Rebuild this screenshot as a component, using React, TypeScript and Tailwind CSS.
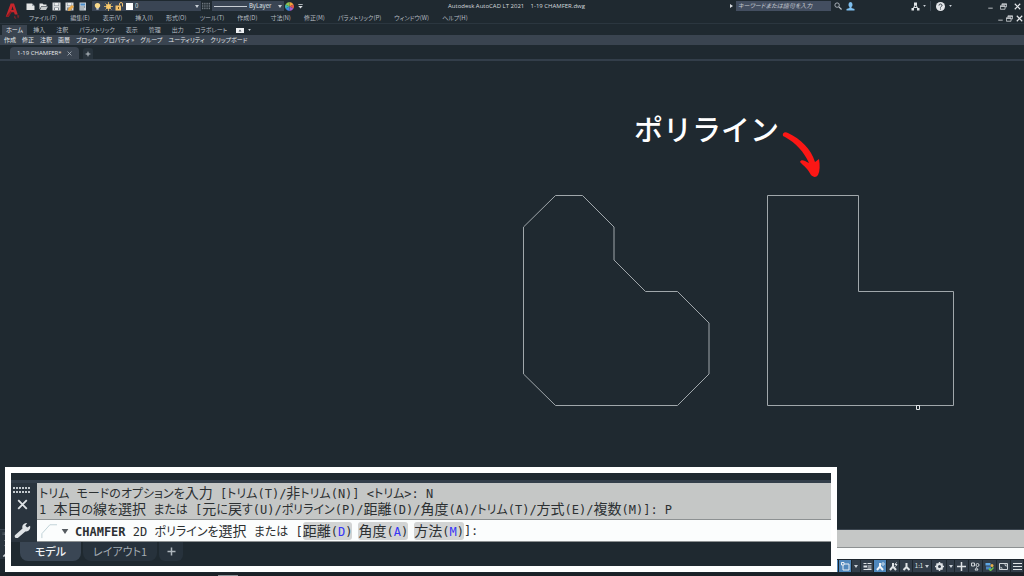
import type { ReactNode } from "react";
import clsx from "clsx";

const menus = [
  "ファイル(F)",
  "編集(E)",
  "表示(V)",
  "挿入(I)",
  "形式(O)",
  "ツール(T)",
  "作成(D)",
  "寸法(N)",
  "修正(M)",
  "パラメトリック(P)",
  "ウィンドウ(W)",
  "ヘルプ(H)",
];

const ribbonTabs = [
  "ホーム",
  "挿入",
  "注釈",
  "パラメトリック",
  "表示",
  "管理",
  "出力",
  "コラボレート",
];

const panels = [
  "作成",
  "修正",
  "注釈",
  "画層",
  "ブロック",
  "プロパティ »",
  "グループ",
  "ユーティリティ",
  "クリップボード",
];

const options = [
  { name: "距離", hotkey: "D" },
  { name: "角度", hotkey: "A" },
  { name: "方法", hotkey: "M" },
];

function Icon({
  children,
  className = "h-[9px] w-[9px]",
}: {
  children: ReactNode;
  className?: string;
}) {
  return (
    <svg viewBox="0 0 18 18" fill="none" className={clsx("block shrink-0", className)}>
      {children}
    </svg>
  );
}

function Caret({ className = "h-[3px] w-[4px] fill-[#c9cfd5]" }: { className?: string }) {
  return (
    <svg viewBox="0 0 8 6" className={clsx("block shrink-0", className)}>
      <path d="M0 0h8L4 6z" />
    </svg>
  );
}

function QuickAccess() {
  return (
    <div className="flex items-center gap-[4px]">
      <button aria-label="クイック新規作成">
        <Icon>
          <path d="M1 3h11l5 5v8H1z" fill="#e4e6e6" />
          <path d="M12 3v5h5z" fill="#98a0a6" />
        </Icon>
      </button>
      <button aria-label="開く">
        <Icon>
          <path d="M1 15V3h6l2 2h6v3H5z" fill="#e4e6e6" />
          <path d="M5 9h13l-4 7H2z" fill="#c8cccd" />
        </Icon>
      </button>
      <button aria-label="上書き保存">
        <Icon>
          <path d="M1 1h16v16H1z" fill="#d8dbdc" />
          <path d="M4 2h10v6H4zM4 11h10v5H4z" fill="#7d868e" />
          <path d="M5 2h8v5H5zM6 12h6v4H6z" fill="#eceeee" />
        </Icon>
      </button>
      <button aria-label="名前を付けて保存">
        <Icon>
          <path d="M1 1h16v16H1z" fill="#d8dbdc" />
          <path d="M4 2h10v6H4zM4 11h10v5H4z" fill="#7d868e" />
          <path d="M5 2h8v5H5z" fill="#eceeee" />
          <path d="M6 18l1-6 7-6 4 3-7 8z" fill="#e9a94a" />
        </Icon>
      </button>
      <button aria-label="印刷">
        <Icon>
          <path d="M3 1h13v16H3z" fill="#c9d0d6" />
          <path d="M5 3h9v4H5z" fill="#4a8ecb" />
          <path d="M5 9h2v2H5zM9 9h2v2H9zM12 9h2v2h-2zM5 13h2v2H5zM9 13h2v2H9z" fill="#55606a" />
        </Icon>
      </button>
    </div>
  );
}

function LayerControl() {
  return (
    <div className="ml-[5px] flex h-[10px] w-[109px] shrink-0 items-center gap-[2px] bg-[#3a4554] px-[2px]">
      <Icon className="h-[9px] w-[7px]">
        <path d="M2 7a7 7 0 0114 0c0 3-3 4-3 6H5c0-2-3-3-3-6z" fill="#f7d98b" />
        <path d="M6 13h6v4H6z" fill="#d0d4d8" />
      </Icon>
      <Icon className="ml-px h-[9px] w-[9px]">
        <circle cx="9" cy="9" r="5" fill="#f7c86b" />
        <path d="M9 0v18M0 9h18M3 3l12 12M15 3L3 15" stroke="#f7c86b" strokeWidth="1.5" />
      </Icon>
      <Icon>
        <path d="M1 7h11v10H1z" fill="#f3c06a" />
        <path d="M9 7V4a3 3 0 016 0v5" stroke="#f3c06a" strokeWidth="2" />
        <path d="M6 10h2v4H6z" fill="#6b5426" />
      </Icon>
      <span className="h-[7px] w-[7px] bg-white" />
      <select
        aria-label="画層"
        className="h-[10px] min-w-0 flex-1 appearance-none bg-transparent text-[6px] leading-[10px] text-[#dde1e5]"
      >
        <option>0</option>
      </select>
      <Caret />
    </div>
  );
}

function WindowButtons({ className }: { className: string }) {
  return (
    <div className={clsx("flex items-center", className)}>
      <button aria-label="最小化">
        <Icon className="h-[7px] w-[5px]">
          <path d="M1 15h16" stroke="#d8dce0" strokeWidth="3" />
        </Icon>
      </button>
      <button aria-label="元に戻す（縮小）">
        <Icon className="h-[7px] w-[7px]">
          <path d="M5 6V2h12v8h-4M1 7h12v9H1zM1 9h12M5 4h12" stroke="#d8dce0" strokeWidth="2" />
        </Icon>
      </button>
      <button aria-label="閉じる">
        <Icon className="h-[7px] w-[7px]">
          <path d="M2 2l14 14M16 2L2 16" stroke="#e4e7ea" strokeWidth="3" />
        </Icon>
      </button>
    </div>
  );
}

function TitleBar() {
  return (
    <div className="flex h-[12px] items-center">
      <QuickAccess />
      <LayerControl />
      <Icon className="ml-px h-[8px] w-[8px]">
        <path
          d="M0 3h18M0 7h18M0 11h18M0 15h18"
          stroke="#8d959d"
          strokeWidth="2"
          strokeDasharray="3 2"
        />
      </Icon>
      <div className="ml-[2px] flex h-[10px] w-[72px] shrink-0 items-center bg-[#3a4554] px-[2px]">
        <span className="h-px w-[33px] bg-[#c9cfd5]" />
        <select
          aria-label="線種"
          className="ml-[2px] h-[10px] min-w-0 flex-1 appearance-none bg-transparent text-[6px] leading-[10px] text-[#dde1e5]"
        >
          <option>ByLayer</option>
        </select>
        <Caret />
      </div>
      <button aria-label="色" className="ml-px">
        <Icon>
          <path d="M9 9V0a9 9 0 018 5z" fill="#f0a23c" />
          <path d="M9 9l8-4a9 9 0 010 8z" fill="#e2574c" />
          <path d="M9 9l8 4a9 9 0 01-8 5z" fill="#a45bc8" />
          <path d="M9 9v9a9 9 0 01-8-5z" fill="#3f86e0" />
          <path d="M9 9l-8 4a9 9 0 010-8z" fill="#3cb6b0" />
          <path d="M9 9L1 5a9 9 0 018-5z" fill="#8cc152" />
        </Icon>
      </button>
      <button aria-label="カスタマイズ" className="ml-[4px]">
        <Icon className="h-[5px] w-[5px]">
          <path d="M1 1h16v3H1zM1 7h16l-8 9z" fill="#d8dce0" />
        </Icon>
      </button>
      <h1 className="flex-1 text-center font-['Open_Sans',sans-serif] text-[6px] leading-[12px] whitespace-pre text-[#d5dade]">
        Autodesk AutoCAD LT 2021{"    "}1-19 CHAMFER.dwg
      </h1>
      <div className="flex w-[294px] shrink-0 items-center">
        <svg viewBox="0 0 6 8" className="h-[4px] w-[3px] fill-[#d8dce0]">
          <path d="M0 0v8l6-4z" />
        </svg>
        <input
          aria-label="検索"
          placeholder="キーワードまたは語句を入力"
          className="ml-[3px] h-[10px] w-[95px] bg-[#434e60] pl-[2px] text-[6px] leading-[10px] italic placeholder:text-[#c3c9d0] [font-feature-settings:'palt']"
        />
        <button aria-label="検索を実行" className="ml-[3px]">
          <Icon className="h-[8px] w-[8px]">
            <circle cx="7" cy="7" r="5" stroke="#b7bec5" strokeWidth="2" />
            <path d="M11 11l6 6" stroke="#b7bec5" strokeWidth="3" />
          </Icon>
        </button>
        <button aria-label="サインイン" className="ml-[4px]">
          <Icon>
            <path
              d="M9 0a5 5 0 014 5c0 3-1 4-2 5v2l6 2v3H1v-3l6-2v-2C6 9 5 8 5 5a5 5 0 014-5z"
              fill="#7fc0f0"
            />
          </Icon>
        </button>
        <button aria-label="Autodesk App Store" className="ml-[56px] flex items-center gap-[3px]">
          <Icon>
            <path d="M9 4L4 14M9 4l5 10M6 11h6" stroke="#dfe3e6" strokeWidth="2" />
            <path d="M6 1h6v6H6zM1 12h5v5H1zM12 12h5v5h-5z" fill="#dfe3e6" />
          </Icon>
          <Caret className="h-[2px] w-[3px] fill-[#c9cfd5]" />
        </button>
        <span className="ml-[4px] h-[10px] w-px bg-[#3a4550]" />
        <button aria-label="ヘルプ" className="ml-[5px] flex items-center gap-[4px]">
          <Icon>
            <circle cx="9" cy="9" r="9" fill="#e4e7ea" />
            <path d="M6 7c0-4 6-4 6 0 0 2-3 2-3 4M9 13v2" stroke="#2a343d" strokeWidth="2" />
          </Icon>
          <Caret className="h-[2px] w-[3px] fill-[#c9cfd5]" />
        </button>
        <WindowButtons className="mr-[3px] ml-auto gap-[7px]" />
      </div>
    </div>
  );
}

function Header() {
  return (
    <header className="flex h-[24px] shrink-0 border-b border-[#2b363f]">
      <div className="w-[26px] shrink-0 pt-[2px] pl-[5px]">
        <svg viewBox="0 0 40 48" className="h-[18px] w-[15px]">
          <path d="M2 39L15 4h9l10 29h-8l-2-6H15l-5 12z" fill="#c5262c" />
          <path d="M17 21h6L20 11z" fill="#1f2930" />
          <path d="M2 39l13-15 3 3-8 12z" fill="#8c1a20" />
          <path d="M26 37v6h4M32 37h6M35 37v6" stroke="#a82027" strokeWidth="2" fill="none" />
        </svg>
      </div>
      <div className="min-w-0 flex-1">
        <TitleBar />
        <div className="flex h-[12px] items-center justify-between pr-px pl-[3px]">
          <nav className="flex gap-[13px] text-[6px] leading-[12px] text-[#b4bbc1] [font-feature-settings:'palt']">
            {menus.map((menu) => (
              <button key={menu}>{menu}</button>
            ))}
          </nav>
          <WindowButtons className="gap-[3px]" />
        </div>
      </div>
    </header>
  );
}

function Ribbon() {
  return (
    <div className="shrink-0 text-[6px] [font-feature-settings:'palt']">
      <div className="flex h-[11px] items-end gap-px pl-[2px]">
        {ribbonTabs.map((tab, i) => (
          <button
            key={tab}
            className={clsx(
              "h-[10px] leading-[10px]",
              i === 0 ? "bg-[#3a4450] px-[4px] text-[#e6e9ec]" : "px-[5px] text-[#b4bbc1]",
            )}
          >
            {tab}
          </button>
        ))}
        <button aria-label="リボンの表示" className="ml-[3px] flex h-[10px] items-center gap-[4px]">
          <svg viewBox="0 0 16 10" className="h-[5px] w-[8px]">
            <path d="M0 0h16v10H0z" fill="#eef0f2" />
            <path d="M5 7l3-4 3 4z" fill="#4b555f" />
          </svg>
          <Caret className="h-[2px] w-[3px] fill-[#c9cfd5]" />
        </button>
      </div>
      <div className="flex h-[10px] items-center gap-[6px] bg-[#3a4450] pl-[4px] leading-[10px] text-[#e0e4e8]">
        {panels.map((panel) => (
          <button key={panel}>{panel}</button>
        ))}
      </div>
    </div>
  );
}

function FileTabs() {
  return (
    <div className="flex h-[16px] shrink-0 items-end gap-[4px] border-b-2 border-[#333e4a] pl-[10px]">
      <div className="flex h-[12px] items-center gap-[5px] rounded-t-[4px] bg-[#3a4450] px-[7px]">
        <a
          href="#drawing"
          className="font-['Open_Sans',sans-serif] text-[6px] leading-[12px] text-[#e6e9ec]"
        >
          1-19 CHAMFER*
        </a>
        <button aria-label="図面を閉じる">
          <Icon className="h-[5px] w-[5px]">
            <path d="M2 2l14 14M16 2L2 16" stroke="#aab2ba" strokeWidth="3" />
          </Icon>
        </button>
      </div>
      <button
        aria-label="新しい図面"
        className="flex h-[11px] w-[10px] items-center justify-center rounded-t-[3px] bg-[#29343d]"
      >
        <Icon className="h-[6px] w-[6px]">
          <path d="M9 2v14M2 9h14" stroke="#b9c0c7" strokeWidth="3" />
        </Icon>
      </button>
    </div>
  );
}

function Drawing() {
  return (
    <main id="drawing" className="relative min-h-0 flex-1 overflow-hidden">
      <svg className="block h-full w-full" fill="none">
        <g stroke="#a0a7ab">
          <path d="M555.5 134.5h27l31.500 31.500v33l31.500 31.500h32l31.500 31.500v51l-31.500 31.500h-122l-32-31.500v-147z" />
          <path d="M767.5 134.5h91v96h95v114h-186z" />
          <path d="M916.500 344.500h3v4h-3z" stroke="#e3e6e8" />
        </g>
        <path
          d="M783 75C782 72 785 70 788 72C801 78 811 88 815 101L819 98C820 104 820 110 818 114C816 117 813 116 811 114C808 108 804 105 800 101C801 98 804 99 809 102C804 91 796 82 785 76z"
          fill="#fb1715"
        />
      </svg>
      <p className="absolute top-[46px] left-[634px] text-[29px] leading-[42px] font-medium whitespace-nowrap text-white">
        ポリライン
      </p>
    </main>
  );
}

function CommandBar() {
  return (
    <div className="flex h-[30px] shrink-0 border-t border-[#3b454f] bg-[#2a343e]">
      <div className="flex w-[13px] flex-col items-center justify-between py-[2px]">
        <Icon className="h-[3px] w-[9px]">
          <path d="M-14 6h46M-14 14h46" stroke="#9aa3ab" strokeWidth="4" strokeDasharray="5 4" />
        </Icon>
        <Icon className="h-[6px] w-[6px]">
          <path d="M2 2l14 14M16 2L2 16" stroke="#d6dade" strokeWidth="3" />
        </Icon>
        <Icon className="h-[7px] w-[9px]">
          <path d="M1 17L12 6" stroke="#d6dade" strokeWidth="4" />
        </Icon>
      </div>
      <div className="flex-1">
        <div className="h-[18px] border-b border-[#8d9192] bg-[#c5c7c6]" />
        <div className="h-[11px] bg-[#fbfdfd]" />
      </div>
    </div>
  );
}

function StatusButton({
  label,
  active = false,
  className = "w-[12px]",
  children,
}: {
  label: string;
  active?: boolean;
  className?: string;
  children?: ReactNode;
}) {
  return (
    <button
      aria-label={label}
      className={clsx(
        "flex h-[12px] shrink-0 items-center justify-center",
        active ? "bg-[#5088bd]" : "bg-[#323d49]",
        className,
      )}
    >
      {children}
    </button>
  );
}

function StatusBar() {
  return (
    <footer className="shrink-0 bg-[#1d262d]">
      <div className="flex h-[14px] items-center justify-end gap-px pr-px">
        <StatusButton label="モデル" className="w-[16px]" />
        <StatusButton label="グリッド" className="w-[36px]" />
        <StatusButton label="スナップ" className="w-[14px]" />
        <StatusButton label="直交モード" active />
        <StatusButton label="極トラッキング" className="w-[7px]" />
        <StatusButton label="オブジェクト スナップ トラッキング" active />
        <StatusButton label="オブジェクト スナップ" active>
          <Icon>
            <path d="M4 4h12v12H4z" stroke="#e8eef4" strokeWidth="2" />
            <path d="M1 1h5v5H1z" fill="#5088bd" stroke="#e8eef4" strokeWidth="2" />
          </Icon>
        </StatusButton>
        <StatusButton label="スナップ設定" className="w-[8px]">
          <Caret />
        </StatusButton>
        <StatusButton label="線の太さ">
          <Icon>
            <path d="M1 3h6M9 3h8M9 8h8M1 15h16M9 12h8" stroke="#dfe3e6" strokeWidth="2" />
            <path d="M1 9h7" stroke="#dfe3e6" strokeWidth="4" />
          </Icon>
        </StatusButton>
        <StatusButton label="注釈オブジェクトを表示" active>
          <Icon>
            <path d="M8 2v7L2 16M8 9l6 7" stroke="#f2f5f8" strokeWidth="4" />
            <circle cx="14" cy="4" r="2.500" stroke="#f2f5f8" strokeWidth="1.500" />
          </Icon>
        </StatusButton>
        <StatusButton label="自動尺度">
          <Icon>
            <path d="M8 2v7L2 16M8 9l6 7" stroke="#dfe3e6" strokeWidth="4" />
            <path d="M15 1l-3 4h4l-3 4" stroke="#dfe3e6" strokeWidth="2" />
          </Icon>
        </StatusButton>
        <StatusButton label="注釈尺度">
          <Icon>
            <path d="M9 2v8L3 16M9 10l6 6" stroke="#dfe3e6" strokeWidth="4" />
          </Icon>
        </StatusButton>
        <button className="flex h-[12px] w-[18px] shrink-0 items-center justify-center gap-[2px] bg-[#323d49] text-[6px] leading-[12px] text-[#dfe3e6]">
          1:1
          <Caret />
        </button>
        <StatusButton label="ワークスペース" className="w-[14px]">
          <Icon>
            <circle cx="9" cy="9" r="5" stroke="#dfe3e6" strokeWidth="4" />
            <path
              d="M9 0v3M9 15v3M0 9h3M15 9h3M3 3l2 2M13 13l2 2M15 3l-2 2M5 13l-2 2"
              stroke="#dfe3e6"
              strokeWidth="3"
            />
          </Icon>
        </StatusButton>
        <StatusButton label="ワークスペースの切り替え" className="w-[7px]">
          <Caret />
        </StatusButton>
        <StatusButton label="注釈モニター" className="w-[13px]">
          <Icon>
            <path d="M9 0v18M0 9h18" stroke="#dfe3e6" strokeWidth="3" />
          </Icon>
        </StatusButton>
        <StatusButton label="オブジェクトを選択表示" className="w-[13px]">
          <Icon>
            <path d="M1 2h6v6H1zM8 16l3-5 3 5z" stroke="#cfd5da" strokeWidth="2" />
            <circle cx="13" cy="6" r="3" stroke="#cfd5da" strokeWidth="2" />
          </Icon>
        </StatusButton>
        <StatusButton label="ハードウェア アクセラレーション" className="w-[13px]">
          <Icon>
            <path d="M1 2h10v5H1z" fill="#5ea8e8" />
            <path d="M2 9h10v6H2z" fill="#4a86c6" />
            <circle cx="14" cy="7" r="3" fill="#e8b04a" />
            <path d="M8 13l3 4 6-6" stroke="#6cc24a" strokeWidth="3" />
          </Icon>
        </StatusButton>
        <StatusButton label="フルスクリーン表示" className="w-[13px]">
          <Icon>
            <path d="M1 3h16v12H1z" stroke="#cfd5da" strokeWidth="2" />
            <path d="M10 5h5v5zM3 13h5L3 9z" fill="#cfd5da" />
          </Icon>
        </StatusButton>
        <StatusButton label="カスタマイズ">
          <Icon>
            <path d="M0 3h18M0 9h18M0 15h18" stroke="#dfe3e6" strokeWidth="2" />
          </Icon>
        </StatusButton>
      </div>
      <div className="flex h-[3px] items-end bg-[#1b2127] pl-[218px]">
        <span className="h-px w-[20px] bg-[#8a9095]" />
      </div>
    </footer>
  );
}

function CommandText({ text }: { text: string }) {
  const runs = text.match(/[\u3040-\u30ff]+|[\u4e00-\u9fff]+|[^\u3040-\u30ff\u4e00-\u9fff]+/g) ?? [];
  return (
    <>
      {runs.map((run, i) => (
        <span
          key={i}
          className={clsx(
            /[\u3040-\u30ff]/.test(run) && "text-[12px]",
            /[\u4e00-\u9fff]/.test(run) && "text-[14px]",
          )}
        >
          {run}
        </span>
      ))}
    </>
  );
}

function CommandZoom() {
  return (
    <section className="absolute bottom-[4px] left-[5px] w-[81.25%] border-[6px] border-white bg-[#1f2930] pb-[5px]">
      <div className="h-[10px] border-b-[3px] border-[#333e4a]" />
      <div className="flex bg-[#2a343e]">
        <div className="flex w-[26px] shrink-0 flex-col items-center pt-[4px] pr-[4px]">
          <svg viewBox="0 0 20 6" className="h-[6px] w-[20px]">
            <path
              d="M1 1h18M1 5h18"
              stroke="#c3c9ce"
              strokeWidth="2"
              strokeDasharray="2 1"
              fill="none"
            />
          </svg>
          <button aria-label="コマンドラインを閉じる" className="mt-[6px]">
            <Icon className="h-[11px] w-[11px]">
              <path d="M2 2l14 14M16 2L2 16" stroke="#dfe3e6" strokeWidth="3" />
            </Icon>
          </button>
          <button aria-label="コマンドラインの設定" className="mt-[11px]">
            <Icon className="h-[17px] w-[17px]">
              <path
                d="M1 15l8-7c-1-3 1-6 5-6l-2 3 2 2 3-2c1 4-2 6-5 6l-8 7c-2 1-4-1-3-3z"
                fill="#dfe3e6"
              />
            </Icon>
          </button>
        </div>
        <div className="min-w-0 flex-1 font-['DejaVu_Sans_Mono','Noto_Sans_CJK_JP',monospace] text-[12px] whitespace-pre text-[#2c3032] [font-feature-settings:'palt']">
          <div className="h-[37px] border-b border-[#8d9192] bg-[#c5c7c6] pt-[2px] pl-[2px] leading-[16px]">
            <p className="h-[16px]">
              <CommandText text="トリム モードのオプションを入力 [トリム(T)/非トリム(N)] <トリム>: N" />
            </p>
            <p className="h-[16px]">
              <CommandText text="1 本目の線を選択 または [元に戻す(U)/ポリライン(P)/距離(D)/角度(A)/トリム(T)/方式(E)/複数(M)]: P" />
            </p>
          </div>
          <div className="flex h-[22px] items-center border-b border-[#8d9192] bg-[#fbfdfd] pt-px pl-[4px] leading-[18px]">
            <Icon className="h-[16px] w-[16px]">
              <path d="M1 17v-5L10 2h8" stroke="#b9cdd3" strokeWidth="1" />
            </Icon>
            <Caret className="ml-[4px] h-[5px] w-[8px] fill-[#555b60]" />
            <label htmlFor="command" className="ml-[6px]">
              <span className="font-bold">CHAMFER</span>
              <CommandText text=" 2D ポリラインを選択 または [" />
            </label>
            <div className="flex gap-[6px]">
              {options.map((option) => (
                <button
                  key={option.name}
                  className="h-[18px] rounded-[3px] bg-[#d2d4d4] leading-[18px]"
                >
                  <CommandText text={option.name} />
                  (<span className="text-[#3535f5]">{option.hotkey}</span>)
                </button>
              ))}
            </div>
            <span>]:</span>
            <input id="command" className="h-[18px] min-w-0 flex-1 bg-transparent" />
          </div>
        </div>
      </div>
      <nav className="flex h-[19px] items-start gap-[2px] pl-[9px] text-[11px] leading-[19px] [font-feature-settings:'palt']">
        <button className="h-[19px] rounded-b-[8px] bg-[#3a4654] px-[15px] font-medium text-[#eef1f3]">
          モデル
        </button>
        <button className="h-[19px] rounded-b-[8px] bg-[#27323c] px-[10px] text-[#a3abb3]">
          レイアウト1
        </button>
        <button
          aria-label="レイアウトを追加"
          className="flex h-[19px] w-[24px] items-center justify-center rounded-b-[6px] bg-[#27323c]"
        >
          <Icon>
            <path d="M9 1v16M1 9h16" stroke="#aeb6bd" strokeWidth="3" />
          </Icon>
        </button>
      </nav>
    </section>
  );
}

export default function App() {
  return (
    <div className="relative flex h-screen flex-col overflow-hidden bg-[#1f2930] font-['Noto_Sans_CJK_JP',sans-serif] text-white">
      <Header />
      <Ribbon />
      <FileTabs />
      <Drawing />
      <CommandBar />
      <StatusBar />
      <CommandZoom />
    </div>
  );
}
